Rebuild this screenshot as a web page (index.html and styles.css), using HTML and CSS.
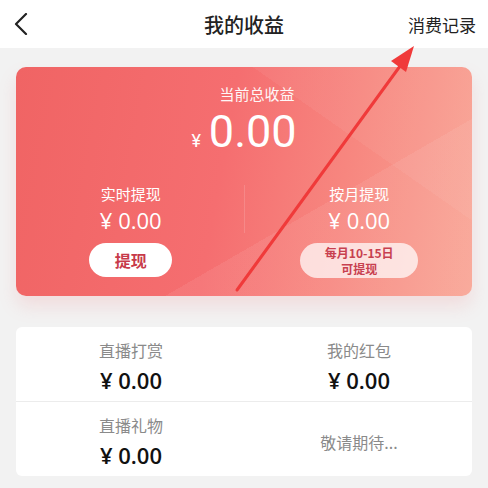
FILE: index.html
```html
<!DOCTYPE html>
<html lang="zh">
<head>
    <meta charset="UTF-8">
    <meta name="viewport" content="width=device-width, initial-scale=1.0">
    <title>我的收益</title>
    <link rel="stylesheet" href="styles.css">
</head>
<body>
    <header class="top-bar">
        <svg class="back-icon" width="14" height="22" viewBox="0 0 14 22">
            <path d="M12 1 L2 11 L12 21" fill="none" stroke="#222" stroke-width="2.2" stroke-linecap="round" stroke-linejoin="round"/>
        </svg>
        <h1 class="page-title">我的收益</h1>
        <a class="records-link">消费记录</a>
    </header>

    <main class="content">
        <section class="income-card">
            <div class="total">
                <div class="total-label">当前总收益</div>
                <div class="total-amount"><span class="yen">¥</span>0.00</div>
            </div>
            <div class="withdraw-row">
                <div class="withdraw-col">
                    <div class="col-label">实时提现</div>
                    <div class="col-amount">¥ 0.00</div>
                    <button class="btn-withdraw">提现</button>
                </div>
                <div class="col-divider"></div>
                <div class="withdraw-col">
                    <div class="col-label">按月提现</div>
                    <div class="col-amount">¥ 0.00</div>
                    <div class="btn-monthly">每月10-15日<br>可提现</div>
                </div>
            </div>
        </section>

        <section class="detail-card">
            <div class="detail-row">
                <div class="detail-item">
                    <div class="detail-label">直播打赏</div>
                    <div class="detail-amount">¥ 0.00</div>
                </div>
                <div class="detail-item">
                    <div class="detail-label">我的红包</div>
                    <div class="detail-amount">¥ 0.00</div>
                </div>
            </div>
            <div class="detail-row">
                <div class="detail-item">
                    <div class="detail-label">直播礼物</div>
                    <div class="detail-amount">¥ 0.00</div>
                </div>
                <div class="detail-item">
                    <div class="detail-label soon">敬请期待...</div>
                </div>
            </div>
        </section>
    </main>

    <!-- annotation arrow drawn over the screenshot -->
    <svg class="annotation" width="488" height="488" viewBox="0 0 488 488">
        <line x1="237" y1="290" x2="403" y2="62" stroke="#f03a3a" stroke-width="3" stroke-linecap="round"/>
        <polygon points="414,46 391,61 406,72" fill="#f03a3a"/>
    </svg>
</body>
</html>
```

FILE: styles.css
```css
body {
    margin: 0;
    background-color: #f2f2f2;
    font-family: "Noto Sans CJK SC", "Noto Sans", sans-serif;
    color: #222;
    position: relative;
    height: 488px;
    overflow: hidden;
}

.top-bar {
    height: 48px;
    background-color: #fff;
    display: flex;
    align-items: center;
    position: relative;
    padding: 0 12px 0 14px;
}

.back-icon {
    display: block;
}

.page-title {
    position: absolute;
    left: 0;
    right: 0;
    margin: 0;
    text-align: center;
    font-size: 20px;
    font-weight: 500;
    pointer-events: none;
}

.records-link {
    margin-left: auto;
    font-size: 17px;
    color: #222;
}

.content {
    padding: 19px 16px 0;
}

.income-card {
    height: 229px;
    border-radius: 10px;
    background: linear-gradient(100deg, #f06464 0%, #f56e70 45%, #f7867f 70%, #f9a595 100%);
    box-shadow: 0 10px 18px rgba(240, 120, 130, 0.18);
    color: #fff;
    display: flex;
    flex-direction: column;
    overflow: hidden;
    position: relative;
}

.income-card::before {
    content: "";
    position: absolute;
    inset: 0;
    background:
        linear-gradient(150deg, rgba(255, 255, 255, 0) 64%, rgba(255, 255, 255, 0.07) 64%),
        linear-gradient(35deg, rgba(255, 255, 255, 0) 72%, rgba(255, 255, 255, 0.05) 72%);
}

.total {
    position: relative;
    padding-top: 19px;
    text-align: center;
}

.total-label {
    font-size: 15px;
    line-height: 16px;
    padding-left: 26px;
    opacity: 0.95;
}

.total-amount {
    font-family: Roboto, "Noto Sans", sans-serif;
    font-size: 45px;
    line-height: 34px;
    margin-top: 13px;
}

.yen {
    font-size: 18px;
    margin-right: 8px;
}

.withdraw-row {
    position: relative;
    display: flex;
    margin-top: 25px;
}

.withdraw-col {
    flex: 1;
    display: flex;
    flex-direction: column;
    align-items: center;
    padding-left: 2px;
}

.col-divider {
    width: 1px;
    height: 48px;
    margin-top: 2px;
    background-color: rgba(255, 255, 255, 0.15);
}

.col-label {
    font-size: 15px;
    line-height: 22px;
}

.col-amount {
    font-family: "Open Sans", "Noto Sans", sans-serif;
    font-size: 22px;
    line-height: 30px;
    margin-top: 0;
}

.btn-withdraw {
    margin-top: 8px;
    width: 83px;
    height: 34px;
    border: none;
    border-radius: 17px;
    background-color: #fff;
    color: #c73a4a;
    font-family: "Noto Sans CJK SC", sans-serif;
    font-size: 16px;
    font-weight: 700;
}

.btn-monthly {
    margin-top: 8px;
    width: 118px;
    height: 35px;
    border-radius: 18px;
    background-color: rgba(255, 255, 255, 0.72);
    color: #c8404f;
    font-size: 12px;
    font-weight: 700;
    line-height: 16px;
    text-align: center;
    display: flex;
    align-items: center;
    justify-content: center;
}

.detail-card {
    margin-top: 31px;
    background-color: #fff;
    border-radius: 6px;
}

.detail-row {
    display: flex;
    height: 74px;
}

.detail-row + .detail-row {
    border-top: 1px solid #ececec;
}

.detail-item {
    flex: 1;
    display: flex;
    flex-direction: column;
    align-items: center;
    justify-content: center;
    padding: 5px 0 0 2px;
}

.detail-label {
    font-size: 16px;
    line-height: 22px;
    color: #8a8a8a;
}

.detail-amount {
    font-family: "Open Sans", "Noto Sans", sans-serif;
    font-size: 22px;
    font-weight: 600;
    line-height: 30px;
    margin-top: 4px;
    color: #111;
}

.soon {
    margin-top: 0;
}

.annotation {
    position: absolute;
    left: 0;
    top: 0;
    pointer-events: none;
}
```
